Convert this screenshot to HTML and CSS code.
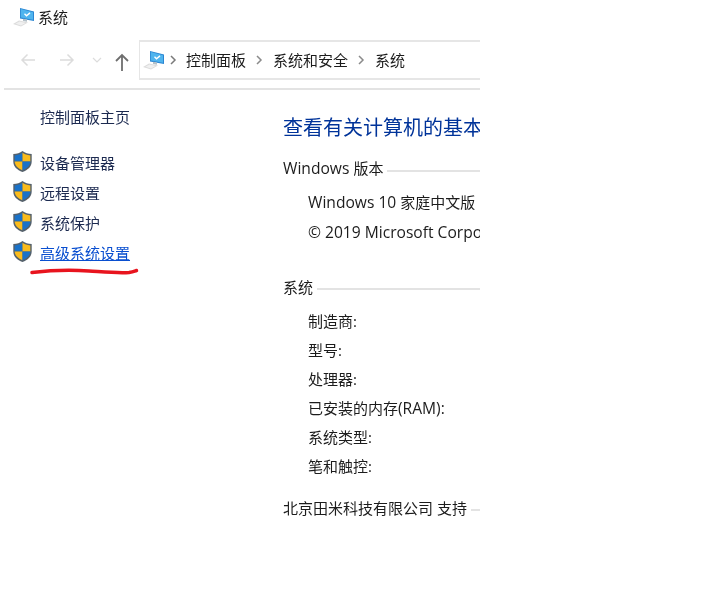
FILE: index.html
```html
<!DOCTYPE html>
<html lang="zh-CN">
<head>
<meta charset="utf-8">
<title>系统</title>
<link rel="stylesheet" href="styles.css">
</head>
<body>
<svg width="0" height="0" class="defs">
  <defs>
    <symbol id="pc" viewBox="0 0 22 20">
      <path d="M0 17 6 13.500 15 15.500 8 19.500Z" fill="#dcdcdc"/>
      <path d="M2.500 16.700 6.500 14.500 12.500 16 8 18.500Z" fill="#f0f0f0"/>
      <path d="M7 1 21 4.500V14L7 11.500Z" fill="#2b86d2"/>
      <path d="M7.800 2 20 5.200V12.800L7.800 10.600Z" fill="#4fb4ee"/>
      <path d="M11.500 6.800 13.500 8.800 17 5.900" fill="none" stroke="#fff" stroke-width="1.400"/>
      <path d="M10 11.800 14 12.600V14.800L10 14Z" fill="#b4c0c8"/>
    </symbol>
    <symbol id="shield" viewBox="0 0 19 21">
      <path d="M9.500 0C7 2 4 3 .3 3V10.500C.3 15.500 4 19 9.500 21 15 19 18.700 15.500 18.700 10.500V3C15 3 12 2 9.500 0Z" fill="#55616c"/>
      <path d="M9.500 1.800C7.500 3.300 5 4.200 1.700 4.400V10.500H9.500Z" fill="#1a72c8"/>
      <path d="M9.500 1.800C11.500 3.300 14 4.200 17.300 4.400V10.500H9.500Z" fill="#fbbc1c"/>
      <path d="M1.700 10.500C1.800 14.500 5 17.400 9.500 19.200V10.500Z" fill="#fbbc1c"/>
      <path d="M17.300 10.500C17.200 14.500 14 17.400 9.500 19.200V10.500Z" fill="#1a72c8"/>
    </symbol>
  </defs>
</svg>
<div class="window">
  <header class="titlebar">
    <svg class="pc-icon"><use href="#pc"/></svg>
    <span class="title">系统</span>
  </header>
  <nav class="navbar">
    <svg class="nav-arrow back" viewBox="0 0 16 14"><path d="M15 7H2M7.500 1.500 2 7l5.500 5.500" fill="none" stroke="#dcdcdc" stroke-width="1.500"/></svg>
    <svg class="nav-arrow forward" viewBox="0 0 16 14"><path d="M1 7h13M8.500 1.500 14 7l-5.500 5.500" fill="none" stroke="#dcdcdc" stroke-width="1.500"/></svg>
    <svg class="nav-caret" viewBox="0 0 10 6"><path d="M1 1l4 4 4-4" fill="none" stroke="#dcdcdc" stroke-width="1.200"/></svg>
    <svg class="nav-up" viewBox="0 0 14 18"><path d="M7 18V2M1 8 7 2l6 6" fill="none" stroke="#6e6e6e" stroke-width="1.800"/></svg>
    <div class="address">
      <svg class="pc-icon small"><use href="#pc"/></svg>
      <svg class="chev first"><path d="M1 1l4 4-4 4" fill="none" stroke="#7a7a7a" stroke-width="1.500"/></svg>
      <span>控制面板</span>
      <svg class="chev"><path d="M1 1l4 4-4 4" fill="none" stroke="#8a8a8a" stroke-width="1.500"/></svg>
      <span>系统和安全</span>
      <svg class="chev"><path d="M1 1l4 4-4 4" fill="none" stroke="#8a8a8a" stroke-width="1.500"/></svg>
      <span>系统</span>
    </div>
  </nav>
  <div class="content">
    <aside class="sidebar">
      <div class="home">控制面板主页</div>
      <ul class="tasks">
        <li><svg class="shield"><use href="#shield"/></svg><span>设备管理器</span></li>
        <li><svg class="shield"><use href="#shield"/></svg><span>远程设置</span></li>
        <li><svg class="shield"><use href="#shield"/></svg><span>系统保护</span></li>
        <li><svg class="shield"><use href="#shield"/></svg><span class="active">高级系统设置</span></li>
      </ul>
    </aside>
    <main class="main">
      <h1>查看有关计算机的基本</h1>
      <section class="group edition">
        <h2><span><span class="latin">Windows </span>版本</span></h2>
        <p><span class="latin">Windows 10 </span>家庭中文版</p>
        <p><span class="latin">© 2019 Microsoft Corpo</span></p>
      </section>
      <section class="group system">
        <h2><span>系统</span></h2>
        <p>制造商:</p>
        <p>型号:</p>
        <p>处理器:</p>
        <p>已安装的内存<span class="latin">(RAM):</span></p>
        <p>系统类型:</p>
        <p>笔和触控:</p>
      </section>
      <section class="group support">
        <h2><span>北京田米科技有限公司 支持</span></h2>
      </section>
    </main>
  </div>
</div>
<svg class="scribble" viewBox="0 0 110 10"><path d="M3 6.500C20 4.500 45 4 60 5 75 6 90 7.500 100 6.500 104 6 106 5 107.500 4.500" fill="none" stroke="#e8141e" stroke-width="3.500" stroke-linecap="round"/></svg>
</body>
</html>
```
FILE: styles.css
```css
* { box-sizing: border-box; }
html, body { margin: 0; padding: 0; background: #fff; }
body {
  width: 723px;
  height: 599px;
  overflow: hidden;
  position: relative;
  font-family: "Open Sans", "Noto Sans CJK SC", sans-serif;
  font-size: 15px;
  color: #1c1c1c;
}
.defs { position: absolute; }
.window { width: 480px; overflow: hidden; filter: blur(0.35px); }
.latin { font-size: 15.6px; }

.titlebar { display: flex; align-items: center; height: 40px; padding: 0 0 7px 13px; }
.pc-icon { width: 22px; height: 20px; flex: none; }
.title { margin-left: 3px; line-height: 20px; }

.navbar { display: flex; align-items: center; height: 40px; width: 480px; margin-bottom: 10px; padding-left: 20px; position: relative; }
.navbar::after { content: ""; position: absolute; left: 4px; right: 0; bottom: -10px; height: 2px; background: #e3e3e3; }
.nav-arrow { width: 16px; height: 14px; flex: none; }
.forward { margin-left: 23px; }
.nav-caret { width: 10px; height: 6px; margin-left: 17px; flex: none; }
.nav-up { width: 14px; height: 18px; margin-left: 13px; margin-top: 3px; flex: none; }
.address {
  display: flex; align-items: center; flex: 1; height: 40px; margin-left: 10px;
  border: 2px solid #e6e6e6; border-right: 0; border-left-width: 1px;
  white-space: nowrap; padding-left: 3px;
}
.address span { position: relative; top: -1px; }
.chev { width: 7px; height: 10px; flex: none; margin: 0 10px 0 10px; }
.chev.first { margin-left: 5px; margin-right: 9px; }

.content { display: flex; }
.sidebar { width: 283px; flex: none; padding: 17px 0 0 13px; }
.home { margin-left: 27px; line-height: 20px; color: #1c2a50; }
.tasks { list-style: none; margin: 20px 0 0; padding: 0; }
.tasks li { display: flex; align-items: center; height: 30px; color: #1c2a50; }
.shield { width: 19px; height: 21px; flex: none; margin-right: 8px; position: relative; top: -1px; }
.active { color: #0a4fd0; text-decoration: underline; }

.main { flex: 1; min-width: 0; overflow: hidden; white-space: nowrap; }
h1 { margin: 0; font-size: 20px; font-weight: 400; color: #003399; line-height: 28px; padding-top: 24px; height: 67px; }
.group h2 { display: flex; align-items: center; margin: 0; font-size: 15px; font-weight: 400; height: 22px; }
.group h2 span { flex: none; }
.group h2 > span { margin-right: 4px; }
.group h2::after { content: ""; flex: 1; height: 2px; margin-top: 5px; background: #e3e3e3; }
.group p { margin: 0 0 0 25px; height: 29px; line-height: 29px; }
.edition h2 { margin-bottom: 8px; }
.edition p { height: 30px; line-height: 30px; }
.system { margin-top: 28px; }
.system h2 { margin-bottom: 10px; }
.support { margin-top: 15px; }
.scribble { position: absolute; left: 29px; top: 266px; width: 110px; height: 10px; }
```
